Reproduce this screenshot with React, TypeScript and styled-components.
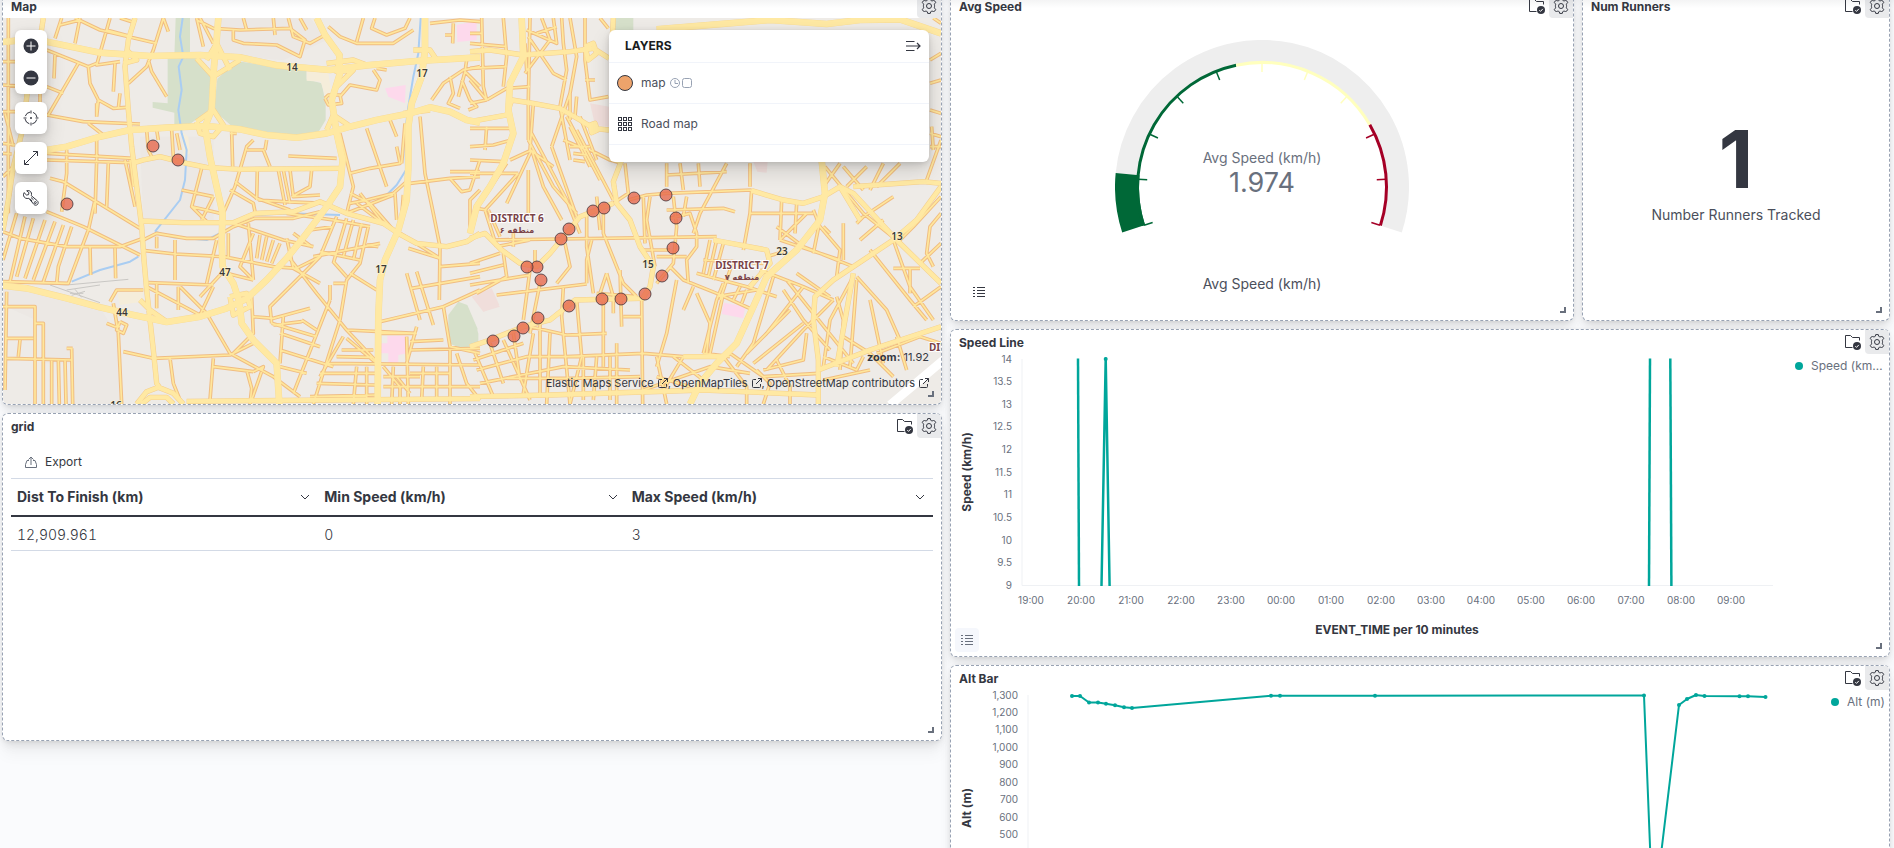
import React from 'react';
import styled, { createGlobalStyle, css } from 'styled-components';

const ink = '#343741';
const body = '#4b4f5b';
const subdued = '#69707d';
const teal = '#00a69b';
const sans = 'Inter, "Liberation Sans", sans-serif';

const GlobalStyle = createGlobalStyle`
  *, *::before, *::after { box-sizing: border-box; }
  body { margin: 0; background: #fafbfd; color: ${ink}; font-family: ${sans}; font-size: 12px; line-height: 16px; overflow: hidden; }
  button { font: inherit; color: inherit; border: 0; padding: 0; background: none; cursor: pointer; }
  svg { display: block; }
`;

/* ---------- layout ---------- */

const Viewport = styled.main`
  position: relative;
  height: 100vh;
  overflow: hidden;
  &::before {
    content: '';
    position: absolute;
    z-index: 3;
    inset: 0 0 auto;
    height: 8px;
    background: linear-gradient(rgba(60, 65, 75, 0.06), rgba(60, 65, 75, 0));
    pointer-events: none;
  }
`;

const Dashboard = styled.div`
  display: grid;
  grid-template-columns: minmax(0, 1fr) minmax(0, 1fr);
  gap: 8px;
  align-items: start;
  margin-top: -7px;
  padding: 0 4px 0 2px;
`;

const Column = styled.div`
  display: flex;
  flex-direction: column;
  gap: 8px;
`;

const Split = styled.div`
  display: grid;
  grid-template-columns: minmax(0, 624fr) minmax(0, 308fr);
  gap: 8px;
`;

const PanelBox = styled.section<{ $tall?: boolean }>`
  position: relative;
  display: flex;
  flex-direction: column;
  min-height: ${(p) => (p.$tall ? 412 : 328)}px;
  background: #fff;
  border: 1px dashed #98a2b3;
  border-radius: 6px;
  box-shadow: 0 1px 4px -1px rgba(0, 0, 0, 0.08), 0 3px 8px -1px rgba(0, 0, 0, 0.06),
    0 6px 12px -1px rgba(0, 0, 0, 0.05), 0 15px 15px -1px rgba(0, 0, 0, 0.04);
`;

const PanelHeader = styled.header`
  display: flex;
  align-items: flex-start;
  height: 24px;
  flex: none;
  padding-left: 8px;
`;

const PanelTitle = styled.h2`
  flex: 1;
  margin: 0;
  font-size: 12px;
  line-height: 26px;
  font-weight: 700;
`;

const GearButton = styled.button`
  display: grid;
  place-items: center;
  width: 24px;
  height: 24px;
  margin-left: 4px;
  background: #e9eaec;
  border-radius: 0 4px 0 4px;
`;

const LibraryMark = styled.span`
  display: grid;
  place-items: center;
  width: 16px;
  height: 24px;
`;

const ResizeHandle = styled.span`
  position: absolute;
  z-index: 2;
  right: 7px;
  bottom: 7px;
  width: 6px;
  height: 6px;
  border: solid ${subdued};
  border-width: 0 2px 2px 0;
`;

/* ---------- icons ---------- */

const Icon = ({ size = 16, children }: { size?: number; children: React.ReactNode }) => (
  <svg width={size} height={size} viewBox="0 0 16 16" fill="none" stroke={ink} aria-hidden="true">
    {children}
  </svg>
);

const GearIcon = () => (
  <Icon>
    <path
      d="M6.700.600h2.600l.400 1.500c.100.500.900 1 1.400.800l1.500-.400c.500-.100 1 .100 1.200.500l.900 1.600-1.100 1.200c-.400.500-.400 1.400 0 1.900v.600c-.400.500-.400 1.400 0 1.900l1.100 1.200-.900 1.600c-.200.400-.700.600-1.200.500l-1.500-.400c-.500-.200-1.300.300-1.400.800l-.400 1.500H6.700l-.400-1.500c-.100-.500-.900-1-1.400-.800l-1.500.400c-.500.100-1-.100-1.200-.500l-.900-1.600 1.100-1.200c.400-.500.400-1.400 0-1.900v-.600c.400-.500.400-1.400 0-1.900L1.300 4.600l.900-1.600c.200-.400.700-.600 1.200-.500l1.500.400c.500.200 1.300-.300 1.400-.800z"
      strokeLinejoin="round"
    />
    <circle cx="8" cy="8" r="2.500" />
  </Icon>
);

const FolderCheckIcon = () => (
  <Icon>
    <path d="M7.500 13.500H.5v-12h5l2 2h7v3" />
    <circle cx="12" cy="12" r="4" fill={ink} stroke="none" />
    <path d="m10.300 12.200 1.200 1.200 2.300-2.500" stroke="#fff" />
  </Icon>
);

const PlusIcon = () => (
  <Icon>
    <circle cx="8" cy="8" r="7.500" fill={ink} stroke="none" />
    <path d="M8 3.500v9M3.500 8h9" stroke="#fff" />
  </Icon>
);

const MinusIcon = () => (
  <Icon>
    <circle cx="8" cy="8" r="7.500" fill={ink} stroke="none" />
    <path d="M3.500 8h9" stroke="#fff" />
  </Icon>
);

const CrosshairIcon = () => (
  <Icon>
    <circle cx="8" cy="8" r="6" strokeDasharray="6.400 3" strokeDashoffset="-1.500" />
    <path d="M8 .5v3M8 12.500v3M.5 8h3M12.500 8h3" />
    <circle cx="8" cy="8" r="1" fill={ink} stroke="none" />
  </Icon>
);

const ExpandIcon = () => (
  <Icon>
    <path d="M10 1.500h4.500V6M1.500 10v4.500H6M14.500 1.500l-13 13" />
  </Icon>
);

const WrenchIcon = () => (
  <Icon>
    <path d="M1 2.600 3.500 5l2-.300.500-2L3.700.8C5.600.1 7.800 1 8.400 3c.3 1 .1 1.800-.2 2.600l6 5.100c1.200 1.100 1.300 2.700.3 3.800-1.100 1-2.700 1-3.700-.2l-5-6C3.500 9 1.300 8 .7 6 .3 4.800.5 3.600 1 2.600z" strokeLinejoin="round" />
    <circle cx="12.300" cy="12.600" r="1" />
    <path d="m8 7.500 2.600 2.400M6.800 8.600l2.400 2.600" />
  </Icon>
);

const CollapseIcon = () => (
  <Icon>
    <path d="M1 3.500h8.500M1 8h13.500M1 12.500h8.500M12 5l3 3-3 3" strokeWidth="1.200" />
  </Icon>
);

const TilesIcon = () => (
  <Icon>
    {[1.5, 6.5, 11.5].map((x) =>
      [1.5, 6.5, 11.5].map((y) => <rect key={`${x}-${y}`} x={x} y={y} width="3" height="3" />),
    )}
  </Icon>
);

const ExternalIcon = () => (
  <svg width="10" height="10" viewBox="0 0 10 10" fill="none" stroke="currentColor" aria-hidden="true">
    <path d="M4 1.500H1.500q-1 0-1 1v6q0 1 1 1h6q1 0 1-1V6M6 .500h3.500V4M9.500.500 4 6" />
  </svg>
);

const ListIcon = ({ color = ink }: { color?: string }) => (
  <svg width="12" height="12" viewBox="0 0 12 12" fill="none" stroke={color} aria-hidden="true">
    <path d="M4 1.500h8M4 4.500h8M4 7.500h8M4 10.500h8M0 1.500h2M0 4.500h2M0 7.500h2M0 10.500h2" />
  </svg>
);

const ExportIcon = () => (
  <svg width="12" height="12" viewBox="0 0 12 12" fill="none" stroke={subdued} aria-hidden="true">
    <path d="M4 4.500H2L.500 8.500v3h11v-3L10 4.500H8M6 9V1M3.500 3.500 6 1l2.500 2.500" />
  </svg>
);

const ChevronIcon = () => (
  <svg width="10" height="6" viewBox="0 0 10 6" fill="none" stroke={ink} aria-hidden="true">
    <path d="m1 1 4 4 4-4" />
  </svg>
);

/* ---------- panel shell ---------- */

interface PanelProps {
  title: string;
  tall?: boolean;
  linked?: boolean;
  children: React.ReactNode;
}

const Panel = ({ title, tall, linked = true, children }: PanelProps) => (
  <PanelBox $tall={tall} aria-label={title}>
    <PanelHeader>
      <PanelTitle>{title}</PanelTitle>
      {linked && <LibraryMark><FolderCheckIcon /></LibraryMark>}
      <GearButton type="button" aria-label={`Panel options for ${title}`}><GearIcon /></GearButton>
    </PanelHeader>
    {children}
    <ResizeHandle />
  </PanelBox>
);

/* ---------- map ---------- */

const MapBody = styled.div`
  position: relative;
  display: flex;
  justify-content: space-between;
  align-items: flex-start;
  flex: 1;
  padding: 12px;
  overflow: hidden;
  border-radius: 0 0 5px 5px;
  background: #eeebe7;
`;

const MapCanvas = styled.svg`
  position: absolute;
  inset: 0;
  width: 100%;
  height: 100%;
  font-family: "Noto Sans", sans-serif;
  font-size: 10px;
  font-weight: 600;
`;

const floating = css`
  background: #fff;
  border-radius: 6px;
  box-shadow: 0 1px 4px rgba(0, 0, 0, 0.08), 0 3px 8px rgba(0, 0, 0, 0.08), 0 8px 20px rgba(0, 0, 0, 0.14);
`;

const MapTools = styled.div`
  position: relative;
  display: flex;
  flex-direction: column;
  gap: 8px;
`;

const ToolGroup = styled.div`
  ${floating}
  display: flex;
  flex-direction: column;
`;

const ToolButton = styled.button`
  display: grid;
  place-items: center;
  width: 32px;
  height: 32px;
`;

const Layers = styled.div`
  ${floating}
  position: relative;
  width: 320px;
  padding-bottom: 17px;
  color: ${body};
`;

const LayersHeader = styled.div`
  display: flex;
  justify-content: space-between;
  align-items: center;
  height: 33px;
  padding: 0 8px 0 16px;
  border-bottom: 1px solid #f1f4fa;
`;

const LayersTitle = styled.h3`
  margin: 0;
  font-size: 12px;
  font-weight: 700;
  color: #1a1c21;
`;

const LayerRow = styled.div`
  display: flex;
  align-items: center;
  height: 41px;
  padding-left: 8px;
  gap: 8px;
  border-bottom: 1px solid #f1f4fa;
`;

const LayerMeta = styled.svg`
  margin-left: -4px;
`;

const MapFooter = styled.div`
  position: absolute;
  right: 12px;
  bottom: 13px;
  display: flex;
  flex-direction: column;
  align-items: flex-end;
  gap: 10px;
  font-size: 11px;
`;

const Attribution = styled.div`
  display: flex;
`;

const SourceLink = styled.a`
  display: flex;
  align-items: center;
  gap: 4px;
  color: ${ink};
  text-decoration: none;
`;

const Comma = styled.span`
  margin-right: 2px;
`;

type Roads = { major: string[]; medium: string[]; minor: string[] };

/* Road geometry is digitised at three units per pixel, one set for each half of the view. */
const west: Roads = {
  major: [
    '9,126 50,122 140,125 300,158 450,168 600,165 720,172 830,196 990,210 1100,196 1250,183 1440,172',
    '140,450 200,440 300,410 390,390 500,383 620,378 720,388 800,405 890,413 980,400 1050,380 1130,360 1230,340 1290,322 1350,335 1400,360 1440,368',
    '1275,54 1275,150 1265,230 1235,310 1225,380 1225,500 1220,600 1195,690 1155,780 1140,840 1135,950 1133,1212',
    '9,857 80,865 200,895 300,922 400,945 500,966 600,950 680,925 740,896 800,840 860,775 920,700 980,620 1020,560 1028,480 1010,400 995,300 1020,220 1018,165 975,105 950,54',
    '655,54 650,120 642,200 635,330 615,380 630,470 650,560 668,640 665,720 668,800 700,850 718,905 725,970 760,1020 830,1090 838,1212',
  ],
  medium: [
    '405,54 385,120 375,200 385,330 395,440 410,560 425,680 432,780 440,870 450,960 460,1050 470,1150 480,1165',
    '425,663 550,668 700,668 765,640 880,635 960,605 1040,640 1150,670 1195,700 1250,730 1340,740 1400,725 1440,700',
    '130,54 115,150 85,250 70,380 40,500 25,600 9,690',
    '395,490 430,480 480,470 560,490 620,502 720,508 1020,505',
    '410,1212 440,1175 475,1162 520,1180 550,1212', '425,1212 450,1192 500,1192 520,1212',
    '560,1204 1440,1196', '590,175 640,230 720,180', '980,190 1060,180 1100,195', '1020,160 1010,215 1060,210 1010,260',
    '590,365 640,330 670,375 640,410 600,400 590,365', '980,390 1000,345 1045,375', '1240,150 1290,150 1310,180',
    '1210,340 1290,330', '690,890 740,880 750,920 700,945 690,890', '420,900 450,930 500,965', '380,150 410,180 370,190', '690,210 650,130 620,180',
  ],
  minor: [
    '25,54 25,640', '9,185 45,185', '9,255 90,260', '9,335 80,335', '9,430 45,435', '9,460 35,462', '9,530 90,450', '15,340 40,440',
    '185,54 165,115', '240,54 225,130', '330,54 290,195 360,185', '490,54 460,150 440,200 385,250', '505,95 490,54', '225,54 300,90 470,130', '320,90 395,110', '180,75 240,60', '360,54 395,65',
    '140,150 265,200 290,190', '165,165 162,235', '235,190 145,345', '140,260 190,280', '265,200 270,250 295,300 290,350', '295,300 340,325 380,322', '345,190 340,275', '360,280 355,325', '120,280 120,350',
    '445,180 455,215 500,290', '140,345 250,365 420,372', '265,370 310,405', '290,350 290,310',
    '590,54 610,140', '600,54 640,130', '590,60 640,85 720,90 870,85', '700,90 700,120 730,130 830,135 900,170 915,120 870,85', '730,54 740,90', '820,54 825,105', '865,54 880,110 930,130 975,105', '900,54 920,90',
    '985,80 1020,110 1070,130 1180,130 1240,90', '1090,54 1070,125', '1125,54 1115,85 1160,105 1215,85 1230,54', '1290,70 1380,60 1440,65', '1360,70 1358,130', '1335,105 1360,105',
    '1440,200 1390,210 1330,250 1295,300', '1395,215 1440,260', '1400,180 1395,215 1375,290', '1350,230 1360,280 1345,310 1380,325', '1385,240 1410,300 1430,320 1405,330', '1260,350 1275,520 1300,640 1320,740 1318,900',
    '140,480 390,488', '200,450 200,520 185,635', '140,460 400,475', '290,415 290,480 285,640', '150,535 190,545 420,685', '325,490 320,620', '375,480 405,620', '390,480 400,560',
    '140,635 250,680 420,765', '9,695 60,715 200,740 360,740 430,715', '50,640 9,780', '75,650 30,845', '100,655 50,830', '135,660 75,835', '165,665 100,840', '190,675 130,845', '215,680 175,800 170,850', '265,690 205,850 9,845', '265,690 285,600', '270,740 272,825', '345,745 347,835',
    '440,390 445,450', '470,390 475,420', '515,390 520,470', '530,400 540,450', '445,450 460,480', '695,395 698,500', '690,400 710,400', '760,420 740,440 705,560 670,640', '740,450 790,450 810,500', '800,420 795,450', '865,468 1010,475',
    '605,505 575,620 620,665', '545,570 640,590', '575,620 660,640', '640,590 605,660', '705,545 770,595 870,630', '690,570 760,610 765,635', '772,510 770,600', '835,510 855,615', '850,510 870,610', '870,510 880,590 960,585', '935,510 930,560 875,590', '775,600 850,605 975,610',
    '430,720 470,700 560,715 640,715 700,680 765,655 880,655 960,635', '470,710 470,745', '435,752 525,762 670,770 820,800 890,805 960,770', '525,720 525,840', '650,720 620,850', '685,700 685,775', '445,848 640,855', '470,850 470,925', '535,860 535,930', '440,860 600,945 640,860', '540,860 620,940 690,1060', '665,820 600,890', '745,670 760,840', '700,670 760,690 850,720 940,740', '760,700 720,800 760,840', '780,705 770,775', '800,710 785,780', '820,720 800,785', '840,730 815,790', '680,820 760,840',
    '860,640 1000,660 1110,680', '880,700 935,740', '930,690 1000,680', '865,770 950,880 1040,990 1130,1085', '860,715 880,805', '1010,650 960,770 880,850 810,920 815,970', '1040,655 1000,790', '1060,660 1030,770', '1085,670 1060,780', '1105,680 1080,790 1040,840 1020,960', '1050,610 1100,600 1180,580 1225,540', '1040,640 1180,585', '1070,610 1150,670', '1050,580 1110,610 1180,690',
    '1050,520 1110,505 1200,490 1190,440', '1100,385 1160,560', '1170,360 1190,410', '1020,400 1060,560 1040,640', '1080,580 1150,670', '1215,370 1205,490', '1185,580 1190,660', '1210,585 1205,650', '1020,290 1050,255 1130,270 1140,240 1120,210', '975,295 985,285 1020,285 1025,310 985,315 975,295', '1130,205 1160,210',
    '1230,550 1350,535 1440,530', '1350,515 1440,515', '1350,535 1385,575 1410,570 1440,480', '1440,570 1410,600 1410,700', '1200,700 1320,775', '1320,800 1440,790', '1220,820 1260,960', '1250,815 1300,975', '1235,865 1440,830', '1140,965 1330,920 1440,870', '1330,920 1350,1040 1440,1060',
    '1225,745 1320,775', '960,755 1080,780', '940,770 1140,730', '1000,785 1040,830', '880,805 960,850', '1000,850 1040,850', '990,855 990,900', '1050,820 1130,870', '1100,735 1135,740',
    '20,875 15,1170', '9,920 105,920 105,1212', '20,1015 100,1015', '20,1075 215,1080', '60,1020 55,1070', '105,970 130,970 130,1212', '155,1080 155,1212', '175,1080 178,1212', '195,1080 198,1212', '215,1045 218,1212', '200,1045 218,1045',
    '330,905 350,870 430,870', '340,910 355,1000 365,1212', '360,980 345,980 320,970', '360,965 380,975 370,1000 350,990 360,965', '370,1055 460,1075 690,1065 760,1030', '510,1075 520,1150 540,1200', '640,1075 630,1200', '640,1100 760,1115', '690,1060 820,1130 900,1190', '755,890 760,1000 700,1060', '740,1110 755,1165 750,1212', '760,1115 790,1100 755,1200',
    '760,950 820,955 930,925', '820,975 905,965', '850,950 840,1090', '815,970 950,1010', '840,1000 960,1040', '840,1050 1000,1100', '840,1100 920,1120', '905,960 950,990', '1020,960 940,1212', '990,900 880,1180', '1040,990 1250,1000', '1030,1010 960,1130', '1040,1015 1130,1090', '960,1120 1130,1120', '980,1090 1440,1095', '1010,1070 1120,1072', '950,1150 1130,1155', '930,1190 1130,1185', '1025,1050 1120,1050', '1070,1100 1060,1212', '1100,1100 1100,1212', '1150,1100 1200,1160 1200,1212', '1180,1100 1175,1212', '1220,1010 1225,1212', '1140,1000 1250,1000', '1250,980 1220,1090', '1150,1130 1260,1130', '1150,1160 1440,1160', '1230,1050 1440,1045', '1230,1025 1330,1020', '1270,1100 1265,1200', '1310,1100 1310,1200', '1350,1050 1350,1212', '1370,1060 1400,1150 1440,1200', '1230,1120 1350,1120', '1190,1130 1230,1180',
  ],
};

const east: Roads = {
  major: [
    '1055,480 1065,580 1050,660 980,750 890,830 850,920 800,1030 740,1090 690,1150 660,1212',
    '155,54 160,170 120,250 115,330 130,400 100,490 60,560 20,620 0,700',
    '560,88 900,60 1070,72 1170,60 1290,58 1413,100',
  ],
  medium: [
    '430,54 425,150 430,250 455,480 430,545 440,610 480,660 510,740 550,800 540,860 515,900',
    '1413,560 1340,660 1270,720 1180,780 1090,840 1035,890 1030,960 1045,1080 1045,1212',
    '0,155 60,150 160,165 300,155 370,145 417,175', '0,365 110,345 125,300 190,310 270,325 330,360 370,385 417,390',
    '845,572 940,600 1000,610 1060,590 1110,560 1150,580 1280,720 1413,850', '0,715 45,700 95,750 150,790 200,800 240,760 330,650 430,610',
    '0,1040 60,1020 160,980 240,960 315,900 515,895', '0,1190 240,1185 700,1170 1045,1185', '1045,1110 1200,1050 1413,980', '1150,820 1100,1100', '1110,560 1170,660',
    '345,140 370,130 380,160 355,180 345,140', '360,375 375,370 382,390 365,398 360,375', '730,720 890,750 900,790 840,860', '1150,560 1360,545 1413,550', '640,1070 760,1070',
  ],
  minor: [
    '515,900 518,1212',
    '35,54 40,260 50,300', '100,54 110,170 100,260', '180,54 175,300 175,420', '215,54 240,120 165,220', '250,54 260,130 170,90', '275,54 280,130 290,210 270,320', '300,54 320,170 300,280 300,360', '345,54 345,180 360,300 415,290', '0,205 110,200', '0,100 35,100', '0,130 110,140', '50,300 110,265 180,260', '50,300 0,240', '0,310 50,300',
    '175,110 250,220 290,240', '165,130 170,210', '320,290 315,350', '345,240 375,240', '390,54 415,85', '200,100 260,80',
    '0,385 120,385', '0,440 70,435 125,420', '0,480 100,485', '0,520 145,520', '50,380 45,450', '110,490 20,625 50,630', '145,520 45,630 80,740', '185,450 110,610', '185,450 220,560 275,660', '185,400 290,600 330,700', '175,510 175,640', '175,420 250,560 320,640', '245,440 320,650', '300,280 245,440', '270,320 300,480', '190,310 180,450 250,500', '290,350 390,540', '320,390 430,600', '360,450 420,480 455,490', '280,420 350,450', '300,440 360,440', '310,460 350,465', '310,480 345,485', '300,380 360,500', '330,350 380,480', '120,480 185,450',
    '60,720 740,710', '80,740 180,720', '55,630 90,710', '130,700 130,740', '195,750 195,800', '0,790 90,760', '0,820 100,795', '100,760 110,830 20,880', '0,855 180,825', '80,885 350,852', '180,810 160,960', '210,850 180,1000', '350,640 350,740 370,880', '285,730 300,800 260,850', '400,640 400,700 460,850 500,890', '380,590 390,690', '365,720 350,780 350,850', '280,860 275,950 300,1212', '450,810 455,980', '410,820 390,880', '410,820 430,890 430,940', '460,950 515,950', '380,880 500,890', '320,900 335,1070 300,1212', '400,900 400,1100', '440,1030 440,1212',
    '465,490 475,580 430,610', '590,490 590,560', '630,490 640,570', '685,490 690,560', '770,490 690,640 670,700', '840,490 840,560', '475,600 530,585 590,580 845,570', '590,525 770,515', '540,590 530,660 555,800', '520,590 525,730', '610,590 620,680 610,790 560,850', '590,630 760,625 795,635', '600,655 660,640 680,700', '650,590 640,650', '680,700 680,740 650,780 655,850', '520,750 600,750', '560,770 650,770', '845,570 840,640 820,750', '840,640 1030,640', '935,600 930,720', '980,610 975,700', '1030,630 1050,680 1110,750 1100,830', '1010,640 930,720',
    '720,720 700,820', '740,720 715,830', '760,730 730,840', '700,780 880,790', '680,820 830,860 920,890', '600,800 640,840 740,880 850,930', '760,850 740,900 700,1060', '790,780 750,900', '810,860 790,900', '830,870 815,910', '860,870 740,890', '620,840 590,1000 560,1100', '670,860 640,930', '680,880 720,970 710,1060', '760,880 720,1060', '890,770 940,755', '870,810 1000,860 1090,900', '910,830 850,1030 800,1100', '940,870 1000,960 1080,1050', '980,820 1080,890', '950,840 1150,1090', '960,930 830,1060', '1000,970 850,1090', '1090,900 1000,990 890,1110', '1000,860 890,1000 830,1060',
    '930,720 1110,780', '920,680 1000,740 1150,800', '1060,610 1030,760', '1080,700 1060,680', '1120,670 1120,780', '1065,500 1180,640 1280,720', '1110,490 1060,560', '1120,500 1180,570', '1190,500 1130,560', '1240,490 1200,570', '1160,670 1180,650 1270,590', '1170,720 1240,660', '1413,590 1330,680 1290,720', '1413,640 1380,680 1370,760 1390,800', '1270,720 1320,860 1390,960', '1200,750 1320,900 1370,960', '1270,805 1350,805', '1320,805 1320,880', '1413,730 1350,790', '1413,860 1330,920', '1160,830 1250,930 1290,1020', '1150,830 1080,960 1060,1100', '1100,890 1120,960 1110,1110', '1120,1010 1200,1060 1270,1130', '1160,840 1140,1100', '1200,900 1240,1090', '1220,1060 1350,1010 1413,1030', '1280,1010 1310,1110',
    '1390,54 1413,70', '1380,180 1413,160', '1380,250 1413,240', '1380,330 1413,340', '1380,400 1413,410', '1380,440 1413,440', '1413,420 1370,540', '1385,380 1390,450', '1290,490 1220,560',
    '10,1080 160,1030', '20,1110 170,1070 330,1070', '30,1150 280,1100 480,1110', '110,1135 300,1135 510,1130', '15,1060 70,1190', '60,1030 100,1150', '100,1020 180,1200', '130,1000 150,1140', '180,980 290,1005 410,1000', '190,1000 160,1180', '210,970 210,1190', '240,1000 230,1212', '290,1070 520,1060 640,1070', '340,1070 340,1200', '380,1070 370,1200', '420,1070 420,1200', '560,1070 590,1212', '610,1070 700,1140', '640,1070 580,1170', '520,1170 720,1100 840,1120', '560,1130 660,1160', '700,1060 780,1070', '760,1070 830,1160 830,1212', '780,1060 880,1130 1045,1120', '860,1110 900,1150 880,1212', '920,1080 960,1160 960,1212', '1010,1000 1000,1080 880,1110', '1060,1070 1160,1110 1180,1070', '1060,1140 1200,1110',
  ],
};

const water = [
  '548,54 540,110 550,170 536,200 545,270 535,330 545,400 560,450 555,540 540,600 465,695', '465,695 520,712 620,720 680,690 720,670', '415,770 390,785 300,810 215,845', '1262,54 1255,160 1240,230 1225,320 1215,400 1218,510 1190,555 1160,585', '770,645 860,640 1020,645',
];

const toPath = (lines: string[]) => lines.map((l) => `M${l}`).join('');

const halves = [
  { roads: west, transform: 'scale(.33333)' },
  { roads: east, transform: 'translate(470 0) scale(.33333)' },
];

const strokes: { kind: keyof Roads; width: number; color: string }[] = [
  { kind: 'minor', width: 11, color: '#f0bd82' },
  { kind: 'medium', width: 16, color: '#f4cf8e' },
  { kind: 'major', width: 20, color: '#f7da96' },
  { kind: 'minor', width: 5, color: '#ffe79c' },
  { kind: 'medium', width: 13, color: '#ffe9a3' },
  { kind: 'major', width: 18, color: '#ffe9a3' },
];

const runners: [number, number][] = [
  [153, 146], [178, 160], [67, 204], [493, 341], [514, 336], [523, 328], [538, 318], [569, 306], [602, 299], [621, 299],
  [645, 294], [662, 276], [673, 248], [676, 218], [666, 195], [634, 198], [604, 208], [593, 211], [569, 229], [561, 239],
  [537, 267], [527, 267], [541, 280],
];

const shields: [string, number, number][] = [
  ['14', 292, 71], ['17', 422, 77], ['47', 225, 276], ['17', 381, 273], ['44', 122, 316], ['16', 116, 409],
  ['15', 648, 268], ['23', 782, 255], ['13', 897, 240],
];

const RunnerMap = () => (
  <MapCanvas viewBox="3 18 938 386" preserveAspectRatio="xMidYMid slice" role="img" aria-label="Road map with runner positions">
    <g transform="scale(.33333)">
      <path fill="#e9e6e2" d="M9 860 300 925 350 1000 360 1212H220V1090H130V970L9 915zM650 54H930L980 120 850 180 660 165zM420 410H640V660H430z" opacity=".5" />
      <path fill="#d6e0ca" d="M527 54h43v105l25 20 40 45v100l-70 52h-42v-38l-65-15v-17l45 4V170h20zM710 183 830 202 920 208v30l45 12 12 60v50l-25 42-60 6-100-10-100-22-50-45 10-95z" />
      <path fill="#d6e0ca" d="M1345 945 1375 905 1402 915 1432 985 1435 1035 1385 1045 1345 1030z" />
      <path fill="#f5edda" d="M920 208 985 220 995 280 975 285 962 245 920 242zM350 870 430 875 425 905 360 915zM545 395 565 410 570 460 550 470z" />
      <path fill="#fdd9ec" d="M1370 75 1430 62 1430 120 1372 126zM1155 265 1217 255 1215 310 1165 290zM1162 1007H1222V1060L1195 1065V1088H1165V1060H1142V1030H1162z" />
      <path fill="#f0dedb" d="M1425 885 1455 875 1500 920 1450 935z" />
      <path fill="none" stroke="#c9c7c4" strokeWidth="3" d="M9 845 200 855 385 838M150 855 300 908M200 870 300 855M210 880 250 880M215 886 255 874M225 868 245 892" />
      <path fill="none" stroke="#a9cdf2" strokeWidth="6" strokeLinejoin="round" d={toPath(water)} />
    </g>
    <g transform="translate(470 0) scale(.33333)">
      <path fill="#d6e0ca" d="M435 54H490V90H435zM0 950 25 1000V1025L0 1030z" />
      <path fill="#f0dedb" d="M5 890 65 865 88 915 40 935zM360 310 417 320V380L375 375zM850 485H893L890 518 862 515z" />
      <path fill="#fdd9ec" d="M762 908 826 920 820 955 755 942zM0 65H18V120H0z" />
      <path fill="none" stroke="#fff" strokeWidth="26" d="M1420 1080 1260 1215" />
    </g>
    {strokes.map((s, i) =>
      halves.map((h, j) => (
        <path
          key={`${i}-${j}`}
          transform={h.transform}
          d={toPath(h.roads[s.kind])}
          fill="none"
          stroke={s.color}
          strokeWidth={s.width}
          strokeLinejoin="round"
        />
      )),
    )}
    {shields.map(([n, x, y]) => (
      <text key={`${n}-${x}`} x={x} y={y} textAnchor="middle" fill="#3b3a35" stroke="#fff6d8" strokeWidth="1" paintOrder="stroke">{n}</text>
    ))}
    <g textAnchor="middle" fill="#7a4348" stroke="#fff" strokeWidth="2" paintOrder="stroke">
      <text x="517" y="222" fontWeight="700">DISTRICT 6</text>
      <text x="742" y="269" fontWeight="700">DISTRICT 7</text>
      <text x="929" y="351" textAnchor="start" fontWeight="700">DI</text>
    </g>
    <g textAnchor="middle" fill="#7a4348" fontSize="8" fontFamily='"DejaVu Sans", sans-serif'>
      <text x="517" y="233">منطقه ۶</text>
      <text x="742" y="280">منطقه ۷</text>
    </g>
    <g fill="#e7664c" fillOpacity=".78" stroke="#41333a" strokeOpacity=".8">
      {runners.map(([x, y]) => <circle key={`${x}-${y}`} cx={x} cy={y} r="6" />)}
    </g>
  </MapCanvas>
);

const MapPanel = () => (
  <Panel title="Map" tall linked={false}>
    <MapBody>
      <RunnerMap />
      <MapTools>
        <ToolGroup>
          <ToolButton type="button" aria-label="Zoom in"><PlusIcon /></ToolButton>
          <ToolButton type="button" aria-label="Zoom out"><MinusIcon /></ToolButton>
        </ToolGroup>
        <ToolGroup><ToolButton type="button" aria-label="Fit to data bounds"><CrosshairIcon /></ToolButton></ToolGroup>
        <ToolGroup><ToolButton type="button" aria-label="Expand"><ExpandIcon /></ToolButton></ToolGroup>
        <ToolGroup><ToolButton type="button" aria-label="Tools"><WrenchIcon /></ToolButton></ToolGroup>
      </MapTools>
      <Layers>
        <LayersHeader>
          <LayersTitle>LAYERS</LayersTitle>
          <button type="button" aria-label="Collapse layers"><CollapseIcon /></button>
        </LayersHeader>
        <LayerRow>
          <Icon><circle cx="8" cy="8" r="7.500" fill="#eda36b" /></Icon>
          map
          <LayerMeta width="22" height="12" viewBox="0 0 22 12" fill="none" stroke="#98a2b3" aria-hidden="true">
            <circle cx="5" cy="6" r="4.500" />
            <path d="M5 3v3.500h3" />
            <rect x="12.500" y="1.500" width="9" height="9" rx="2" />
          </LayerMeta>
        </LayerRow>
        <LayerRow><TilesIcon />Road map</LayerRow>
      </Layers>
      <MapFooter>
        <span><strong>zoom:</strong> 11.92</span>
        <Attribution>
          <SourceLink href="#ems">Elastic Maps Service <ExternalIcon /></SourceLink><Comma>,</Comma>
          <SourceLink href="#omt">OpenMapTiles <ExternalIcon /></SourceLink><Comma>,</Comma>
          <SourceLink href="#osm">OpenStreetMap contributors <ExternalIcon /></SourceLink>
        </Attribution>
      </MapFooter>
    </MapBody>
  </Panel>
);

/* ---------- grid ---------- */

const GridBody = styled.div`
  padding: 12px 8px 8px;
`;

const ExportButton = styled.button`
  display: flex;
  align-items: center;
  gap: 8px;
  height: 24px;
  margin: 0 0 4px 14px;
`;

const DataTable = styled.table`
  width: 100%;
  table-layout: fixed;
  border-collapse: collapse;
  font-size: 14px;
  line-height: 20px;
  border-top: 1px solid #d3dae6;
  th {
    padding: 8px 8px 8px 6px;
    text-align: left;
    font-weight: 700;
    border-bottom: 2px solid ${ink};
  }
  td {
    padding: 8px 6px 4px;
    height: 34px;
    font-weight: 300;
    font-variant-numeric: tabular-nums;
    border-bottom: 1px solid #d3dae6;
  }
`;

const HeadCell = styled.div`
  display: flex;
  justify-content: space-between;
  align-items: center;
`;

const GridPanel = () => (
  <Panel title="grid">
    <GridBody>
      <ExportButton type="button"><ExportIcon />Export</ExportButton>
      <DataTable>
        <thead>
          <tr>
            {['Dist To Finish (km)', 'Min Speed (km/h)', 'Max Speed (km/h)'].map((h) => (
              <th key={h} scope="col"><HeadCell>{h}<ChevronIcon /></HeadCell></th>
            ))}
          </tr>
        </thead>
        <tbody>
          <tr><td>12,909.961</td><td>0</td><td>3</td></tr>
        </tbody>
      </DataTable>
    </GridBody>
  </Panel>
);

/* ---------- gauge ---------- */

const LegendToggle = styled.button<{ $inset: number; $filled?: boolean }>`
  position: absolute;
  left: ${(p) => p.$inset}px;
  bottom: ${(p) => p.$inset}px;
  display: grid;
  place-items: center;
  width: 24px;
  height: 24px;
  border-radius: 4px;
  background: ${(p) => (p.$filled ? '#f5f7fc' : 'transparent')};
`;

const GaugeBody = styled.div`
  flex: 1;
  display: flex;
  flex-direction: column;
  align-items: center;
  padding-top: 22px;
`;

const GaugeLabel = styled.div`
  margin-top: 28px;
  font-size: 14px;
  line-height: 20px;
  color: ${body};
`;

const polar = (r: number, deg: number) => {
  const a = (deg * Math.PI) / 180;
  return `${(147 + r * Math.sin(a)).toFixed(2)} ${(147 - r * Math.cos(a)).toFixed(2)}`;
};

const arc = (r: number, from: number, to: number) =>
  `M${polar(r, from)}A${r} ${r} 0 ${to - from > 180 ? 1 : 0} 1 ${polar(r, to)}`;

const bands = [
  { from: -108, to: -12, color: '#006837' },
  { from: -12, to: 60, color: '#ffffbe' },
  { from: 60, to: 108, color: '#a50026' },
];

const bandColor = (deg: number) => bands.find((b) => deg <= b.to + 0.5)!.color;

const GaugePanel = () => (
  <Panel title="Avg Speed">
    <GaugeBody>
      <svg width="294" height="206" viewBox="0 0 294 206" fill="none" fontFamily={sans} textAnchor="middle" role="img" aria-label="Avg Speed gauge">
        <path d={arc(136, -84.5, 108)} stroke="#eee" strokeWidth="22" />
        <path d={arc(135, -108, -84.5)} stroke="#006837" strokeWidth="24" />
        {bands.map((b) => <path key={b.from} d={arc(124.5, b.from, b.to)} stroke={b.color} strokeWidth="3" />)}
        {Array.from({ length: 11 }, (_, i) => -108 + i * 21.6).map((deg) => (
          <path key={deg} d={`M${polar(124, deg)}L${polar(115, deg)}`} stroke={bandColor(deg)} strokeWidth="1.500" />
        ))}
        <text x="147" y="123" fontSize="14" fill={subdued}>Avg Speed (km/h)</text>
        <text x="147" y="152" fontSize="27" fill={subdued}>1.974</text>
      </svg>
      <GaugeLabel>Avg Speed (km/h)</GaugeLabel>
    </GaugeBody>
    <LegendToggle type="button" aria-label="Toggle legend" $inset={16}><ListIcon /></LegendToggle>
  </Panel>
);

/* ---------- metric ---------- */

const MetricBody = styled.div`
  flex: 1;
  display: flex;
  flex-direction: column;
  align-items: center;
  justify-content: center;
`;

const MetricValue = styled.div`
  font-size: 80px;
  line-height: 92px;
  font-weight: 700;
`;

const MetricLabel = styled.div`
  font-size: 14px;
  line-height: 20px;
  color: ${body};
`;

const MetricPanel = () => (
  <Panel title="Num Runners">
    <MetricBody>
      <MetricValue>1</MetricValue>
      <MetricLabel>Number Runners Tracked</MetricLabel>
    </MetricBody>
  </Panel>
);

/* ---------- line charts ---------- */

const ChartBody = styled.div`
  flex: 1;
  display: flex;
`;

const ChartSvg = styled.svg`
  flex: 1;
  min-width: 0;
  height: 302px;
  font-family: ${sans};
  font-size: 10px;
`;

const Legend = styled.div<{ $width: number }>`
  display: flex;
  align-items: center;
  gap: 8px;
  width: ${(p) => p.$width}px;
  height: 16px;
  margin-top: 4px;
  padding: 0 4px 0 6px;
  color: ${subdued};
  white-space: nowrap;
`;

const LegendDot = styled.span`
  width: 8px;
  height: 8px;
  flex: none;
  border-radius: 50%;
  background: ${teal};
`;

const LegendName = styled.span`
  overflow: hidden;
  text-overflow: ellipsis;
`;

interface ChartProps {
  name: string;
  yTitle: string;
  yTitleAt: number;
  ticks: string[];
  tickStep: number;
  axisX: number;
  width: number;
  legend: string;
  xTitle?: string;
  lines: [number, number][][];
  lineWidth: number;
  dots: [number, number][];
  floor: number;
}

const LineChart = (p: ChartProps) => (
  <ChartBody>
    <ChartSvg viewBox={`0 0 ${p.width} 302`} preserveAspectRatio="xMinYMin meet" role="img" aria-label={p.name}>
      <path d={`M${p.axisX} 5V${p.floor}H${p.axisX + 751}`} fill="none" stroke="#eff1f4" />
      <g fill={subdued} textAnchor="end">
        {p.ticks.map((t, i) => <text key={t} x={p.axisX - 10} y={8.5 + i * p.tickStep}>{t}</text>)}
      </g>
      {p.xTitle && (
        <>
          <g fill={subdued} textAnchor="middle">
            {Array.from({ length: 15 }, (_, i) => (
              <text key={i} x={80 + i * 50} y="250">{`${String((19 + i) % 24).padStart(2, '0')}:00`}</text>
            ))}
          </g>
          <text x="446" y="280" textAnchor="middle" fontSize="12" fontWeight="700" fill={ink}>{p.xTitle}</text>
        </>
      )}
      <text transform={`translate(20 ${p.yTitleAt}) rotate(-90)`} textAnchor="middle" fontSize="12" fontWeight="700" fill={ink}>{p.yTitle}</text>
      <g fill="none" stroke={teal} strokeWidth={p.lineWidth} strokeLinejoin="round">
        {p.lines.map((l, i) => <polyline key={i} points={l.map((q) => q.join(',')).join(' ')} />)}
      </g>
      <g fill={teal}>
        {p.dots.map(([x, y]) => <circle key={x} cx={x} cy={y} r="2" />)}
      </g>
    </ChartSvg>
    <Legend $width={938 - p.width}><LegendDot /><LegendName>{p.legend}</LegendName></Legend>
  </ChartBody>
);

const altStart: [number, number][] = [
  [121, 6], [129, 6], [138, 12.5], [147, 12.5], [155, 13.7], [164, 15.2], [173, 17.3], [181, 18],
  [320, 5.7], [329, 5.7], [424, 5.7], [693, 5.5],
];
const altEnd: [number, number][] = [
  [728, 15], [736, 9], [745, 5], [753.5, 6], [788.5, 6.2], [797, 6.2], [814.5, 7],
];

const App = () => (
  <>
    <GlobalStyle />
    <Viewport>
      <Dashboard>
        <Column>
          <MapPanel />
          <GridPanel />
        </Column>
        <Column>
          <Split>
            <GaugePanel />
            <MetricPanel />
          </Split>
          <Panel title="Speed Line">
            <LineChart
              name="Speed over time"
              yTitle="Speed (km/h)"
              yTitleAt={118}
              ticks={['14', '13.5', '13', '12.5', '12', '11.5', '11', '10.5', '10', '9.5', '9']}
              tickStep={22.65}
              axisX={71}
              width={838}
              floor={231.5}
              legend="Speed (km/h)"
              xTitle="EVENT_TIME per 10 minutes"
              lineWidth={2.5}
              lines={[
                [[127, 4.5], [128, 232]],
                [[150.5, 232], [154.7, 4.5], [158.6, 232]],
                [[699, 4.5], [698, 232]],
                [[719.3, 4.5], [720.4, 232]],
              ]}
              dots={[[154.7, 5]]}
            />
            <LegendToggle type="button" aria-label="Toggle legend" $inset={4} $filled><ListIcon color={subdued} /></LegendToggle>
          </Panel>
          <Panel title="Alt Bar">
            <LineChart
              name="Altitude over time"
              yTitle="Alt (m)"
              yTitleAt={118}
              ticks={['1,300', '1,200', '1,100', '1,000', '900', '800', '700', '600', '500']}
              tickStep={17.45}
              axisX={77}
              width={874}
              floor={231.5}
              legend="Alt (m)"
              lineWidth={2}
              lines={[[...altStart, [702, 231], ...altEnd]]}
              dots={[...altStart, ...altEnd]}
            />
          </Panel>
        </Column>
      </Dashboard>
    </Viewport>
  </>
);

export default App;
